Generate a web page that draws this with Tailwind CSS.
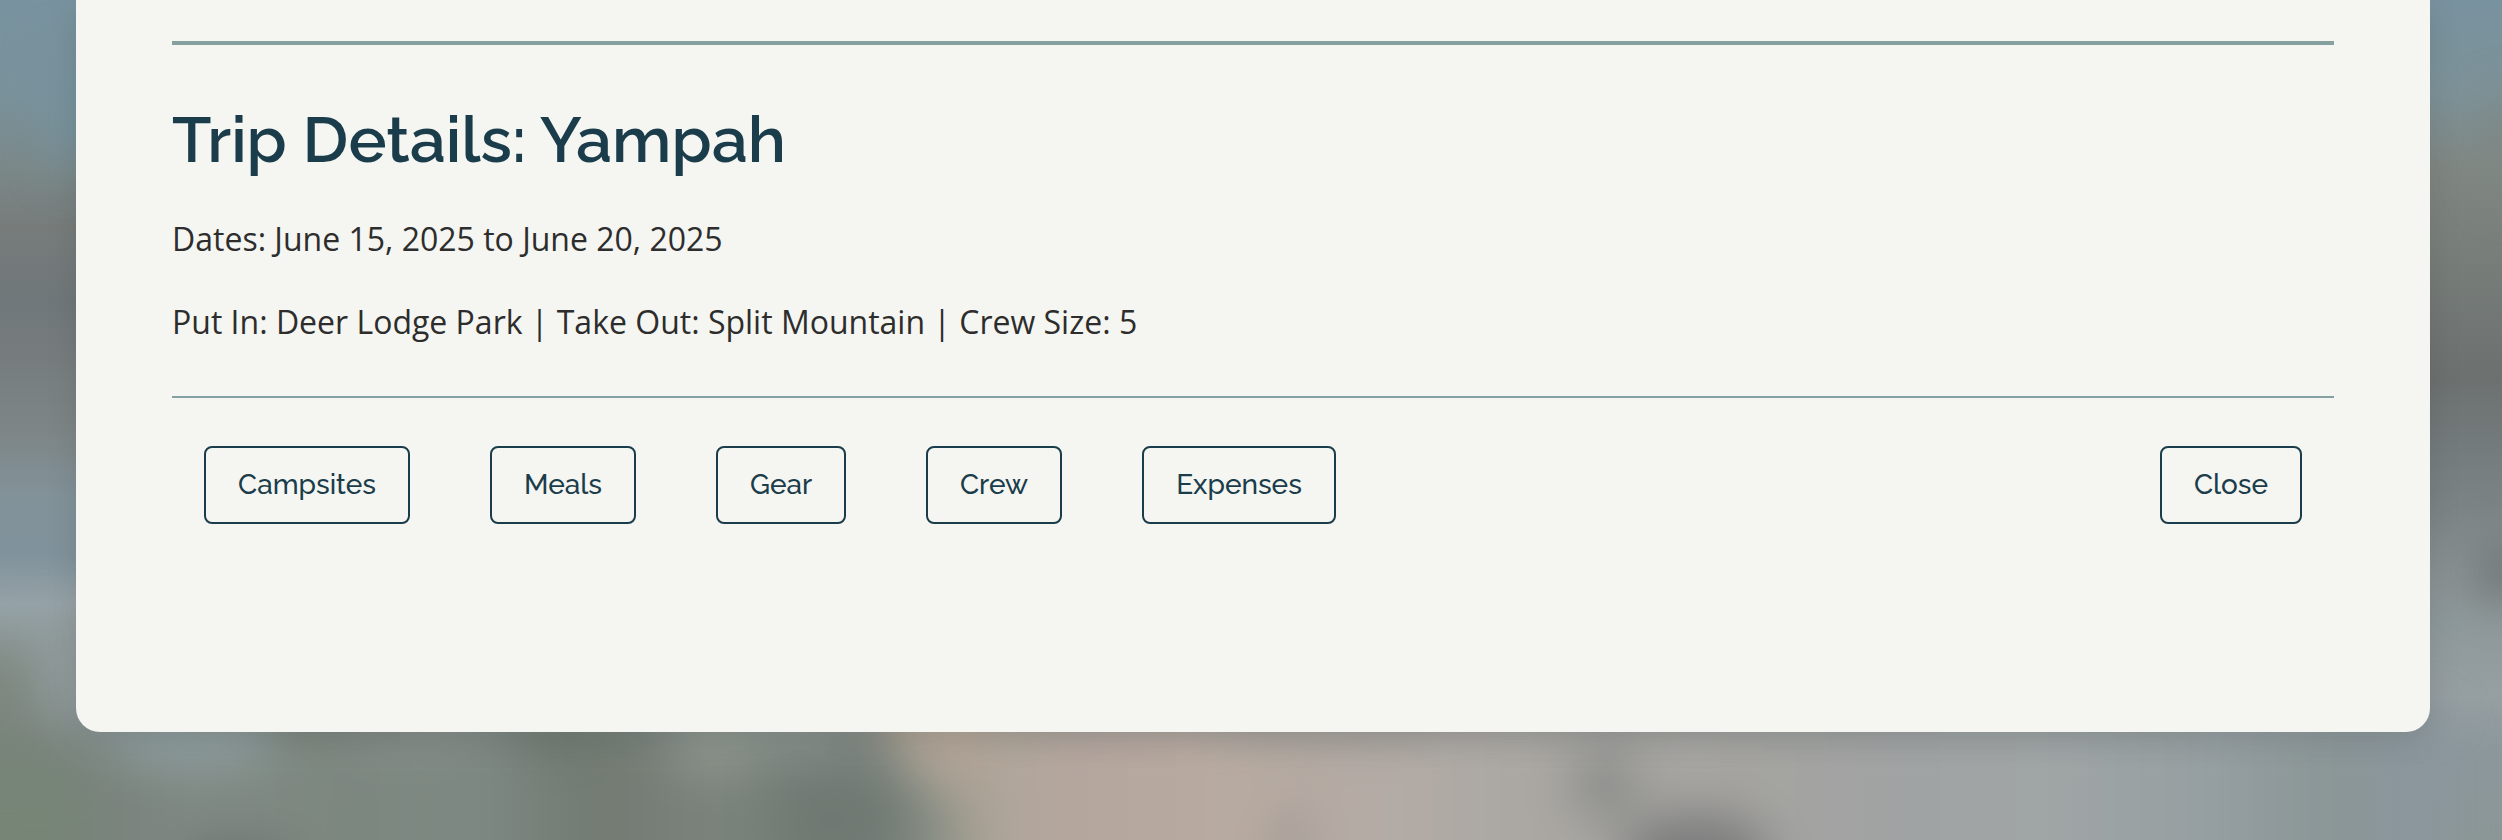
<!DOCTYPE html>
<html lang="en">
<head>
<meta charset="utf-8">
<title>Trip Details</title>
<script src="https://cdn.jsdelivr.net/npm/@tailwindcss/browser@4"></script>
</head>
<body class="relative h-[840px] overflow-hidden bg-[#858f90] font-['Open_Sans',sans-serif]">
<svg class="absolute inset-0" width="2502" height="840" viewBox="0 0 2502 840" aria-hidden="true">
  <defs>
    <linearGradient id="left" gradientUnits="userSpaceOnUse" x1="0" y1="0" x2="0" y2="840">
      <stop offset="0" stop-color="#78939f"/><stop offset=".11" stop-color="#7a929c"/><stop offset=".2" stop-color="#7b8888"/><stop offset=".27" stop-color="#777c7b"/><stop offset=".36" stop-color="#70777a"/><stop offset=".42" stop-color="#767c7e"/><stop offset=".51" stop-color="#7d8586"/><stop offset=".59" stop-color="#829299"/><stop offset=".66" stop-color="#80929b"/><stop offset=".72" stop-color="#96a3a8"/><stop offset=".79" stop-color="#8b9592"/><stop offset=".88" stop-color="#78837a"/><stop offset="1" stop-color="#768678"/>
    </linearGradient>
    <linearGradient id="right" gradientUnits="userSpaceOnUse" x1="0" y1="0" x2="0" y2="840">
      <stop offset="0" stop-color="#78929f"/><stop offset=".11" stop-color="#7d9298"/><stop offset=".2" stop-color="#808783"/><stop offset=".3" stop-color="#787e7a"/><stop offset=".45" stop-color="#6c7170"/><stop offset=".6" stop-color="#7b8385"/><stop offset=".68" stop-color="#8a9294"/><stop offset=".74" stop-color="#8e999b"/><stop offset=".83" stop-color="#969fa2"/><stop offset=".9" stop-color="#8b979b"/><stop offset="1" stop-color="#8b9797"/>
    </linearGradient>
    <linearGradient id="bottom" gradientUnits="userSpaceOnUse" x1="0" y1="0" x2="2502" y2="0">
      <stop offset="0" stop-color="#77877a"/><stop offset=".036" stop-color="#78827b"/><stop offset=".08" stop-color="#808a84"/><stop offset=".14" stop-color="#7c877f"/><stop offset=".19" stop-color="#7d8983"/><stop offset=".24" stop-color="#727a72"/><stop offset=".285" stop-color="#7b837c"/><stop offset=".325" stop-color="#747c77"/><stop offset=".365" stop-color="#7a857e"/><stop offset=".385" stop-color="#a09d90"/><stop offset=".405" stop-color="#b2a79c"/><stop offset=".44" stop-color="#b5a69e"/><stop offset=".5" stop-color="#b8aba1"/><stop offset=".56" stop-color="#b3aba6"/><stop offset=".6" stop-color="#aba8a3"/><stop offset=".7" stop-color="#a5a4a0"/><stop offset=".76" stop-color="#a0a3a3"/><stop offset=".82" stop-color="#a0a5a5"/><stop offset=".88" stop-color="#969fa2"/><stop offset=".93" stop-color="#8b9697"/><stop offset=".975" stop-color="#8a969d"/><stop offset="1" stop-color="#8c9898"/>
    </linearGradient>
    <filter id="soft" filterUnits="userSpaceOnUse" x="-200" y="-100" width="2902" height="1200" color-interpolation-filters="sRGB"><feGaussianBlur stdDeviation="24"/></filter>
  </defs>
  <rect width="400" height="840" fill="url(#left)"/>
  <rect x="2200" width="302" height="840" fill="url(#right)"/>
  <g filter="url(#soft)">
    <rect x="60" y="715" width="2380" height="300" fill="url(#bottom)"/>
    <rect x="-150" y="770" width="230" height="300" fill="#778577"/>
    <rect x="50" y="620" width="80" height="110" fill="#919b9d"/>
    <ellipse cx="-5" cy="700" rx="24" ry="60" fill="#7a857b"/>
    <ellipse cx="190" cy="735" rx="90" ry="32" fill="#8f9d9f"/>
    <ellipse cx="410" cy="735" rx="70" ry="24" fill="#868c88"/>
    <ellipse cx="560" cy="735" rx="40" ry="30" fill="#6f796f"/>
    <ellipse cx="715" cy="740" rx="50" ry="34" fill="#8d958d"/>
    <ellipse cx="800" cy="720" rx="55" ry="35" fill="#8c948f"/>
    <ellipse cx="840" cy="820" rx="65" ry="45" fill="#707872"/>
    <path d="M855 690H1000V790H925Z" fill="#b0a496"/>
    <ellipse cx="1330" cy="725" rx="110" ry="20" fill="#a19d98"/>
    <ellipse cx="1605" cy="785" rx="34" ry="36" fill="#8b8d8a"/>
    <ellipse cx="1695" cy="855" rx="75" ry="42" fill="#7b7c7c"/>
    <ellipse cx="1290" cy="840" rx="20" ry="35" fill="#a39a96"/>
    <ellipse cx="235" cy="870" rx="60" ry="30" fill="#6d726d"/>
    <ellipse cx="2510" cy="572" rx="38" ry="24" fill="#6b706f"/>
    <ellipse cx="75" cy="110" rx="28" ry="60" fill="#76929d"/>
    <ellipse cx="2510" cy="145" rx="20" ry="50" fill="#7e8783"/>
  </g>
</svg>
<main class="relative ml-[76px] h-[732px] w-[2354px] rounded-b-[24px] bg-[#f5f6f1] px-24 pt-[41px] shadow-[0_8px_32px_rgba(0,0,0,0.1)]">
  <section class="border-t-4 border-[#84a09f]">
    <h2 class="mt-[55px] h-[80px] whitespace-nowrap font-['Raleway','Lato',sans-serif] text-[64px] leading-[80px] font-semibold text-[#1b3d4b]">Trip Details: Yampah</h2>
    <p class="mt-[33px] text-[32px] leading-[51px] text-[#2d2d2d]">Dates: June 15, 2025 to June 20, 2025</p>
    <p class="mt-8 text-[32px] leading-[51px] text-[#2d2d2d]">Put In: Deer Lodge Park | Take Out: Split Mountain | Crew Size: 5</p>
  </section>
  <nav class="mt-[49px] flex justify-between border-t-2 border-[#84a0a3] px-8 pt-12 font-['Raleway','Lato',sans-serif] text-[28px] font-medium text-[#1b3d4b]">
    <div class="flex gap-20">
      <button class="h-[78px] w-[206px] rounded-lg border-2 border-[#1b3d4b]">Campsites</button>
      <button class="h-[78px] w-[146px] rounded-lg border-2 border-[#1b3d4b]">Meals</button>
      <button class="h-[78px] w-[130px] rounded-lg border-2 border-[#1b3d4b]">Gear</button>
      <button class="h-[78px] w-[136px] rounded-lg border-2 border-[#1b3d4b]">Crew</button>
      <button class="h-[78px] w-[194px] rounded-lg border-2 border-[#1b3d4b]">Expenses</button>
    </div>
    <button class="h-[78px] w-[142px] rounded-lg border-2 border-[#1b3d4b]">Close</button>
  </nav>
</main>
</body>
</html>
